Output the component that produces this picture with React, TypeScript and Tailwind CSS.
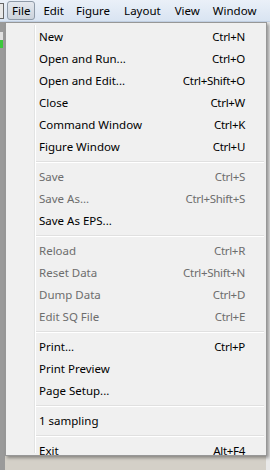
import React from "react";

type Item =
  | { sep: true }
  | { label: string; shortcut?: string; disabled?: boolean; sep?: false };

const items: Item[] = [
  { label: "New", shortcut: "Ctrl+N" },
  { label: "Open and Run...", shortcut: "Ctrl+O" },
  { label: "Open and Edit...", shortcut: "Ctrl+Shift+O" },
  { label: "Close", shortcut: "Ctrl+W" },
  { label: "Command Window", shortcut: "Ctrl+K" },
  { label: "Figure Window", shortcut: "Ctrl+U" },
  { sep: true },
  { label: "Save", shortcut: "Ctrl+S", disabled: true },
  { label: "Save As...", shortcut: "Ctrl+Shift+S", disabled: true },
  { label: "Save As EPS..." },
  { sep: true },
  { label: "Reload", shortcut: "Ctrl+R", disabled: true },
  { label: "Reset Data", shortcut: "Ctrl+Shift+N", disabled: true },
  { label: "Dump Data", shortcut: "Ctrl+D", disabled: true },
  { label: "Edit SQ File", shortcut: "Ctrl+E", disabled: true },
  { sep: true },
  { label: "Print...", shortcut: "Ctrl+P" },
  { label: "Print Preview" },
  { label: "Page Setup..." },
  { sep: true },
  { label: "1 sampling" },
  { sep: true },
  { label: "Exit", shortcut: "Alt+F4" },
];

export default function App() {
  return (
    <div
      className="relative w-[270px] h-[470px] overflow-hidden bg-[#d4d0c8] text-[11.5px]"
      style={{ fontFamily: '"Noto Sans", "Open Sans", sans-serif' }}
    >
      {/* menu bar */}
      <div className="flex h-[22px] items-center bg-gradient-to-b from-[#eaf0f8] to-[#d9e4f2] border-b border-[#c5d3e6] text-black">
        <div className="w-[4px] h-[16px] border border-[#666] border-l-0 bg-[#e8e8e8]" />
        <div className="ml-[3px] h-[19px] px-[4px] flex items-center rounded-[3px] border border-[#8e9aa8] bg-gradient-to-b from-[#e4e8ee] to-[#ccd3dc]">
          File
        </div>
        <div className="ml-[8px]">Edit</div>
        <div className="ml-[12px]">Figure</div>
        <div className="ml-[14px]">Layout</div>
        <div className="ml-[14px]">View</div>
        <div className="ml-[13px]">Window</div>
      </div>
      {/* background strips */}
      <div className="absolute left-0 top-[22px] w-[5px] h-[448px] bg-[#9a9a9a]">
        <div className="mt-[10px] h-[8px] w-[3px] bg-[#e0e0e0]" />
        <div className="h-[8px] w-[3px] bg-[#3cc83c]" />
      </div>
      <div className="absolute right-0 top-[22px] w-[4px] h-[448px] bg-[#e9e9e9]" />

      {/* dropdown */}
      <div className="absolute left-[5px] top-[22px] w-[262px] h-[434px] border border-[#979797] bg-[#f0f0f0] shadow-[2px_2px_3px_rgba(0,0,0,0.35)]">
        <div className="absolute left-[28px] top-[2px] bottom-[2px] w-[1px] bg-[#e2e3e3]" />
        <div className="absolute left-[29px] top-[2px] bottom-[2px] w-[1px] bg-white" />
        <div className="relative flex flex-col pt-[3px] pl-[2px] pr-[2px]">
          {items.map((it, i) =>
            it.sep ? (
              <div key={i} className="h-[8px] flex flex-col justify-center pl-[28px]">
                <div className="h-[1px] bg-[#e0e0e0]" />
                <div className="h-[1px] bg-white" />
              </div>
            ) : (
              <div
                key={i}
                className={`h-[22px] flex items-center justify-between pl-[31px] pr-[19px] ${
                  it.disabled ? "text-[#6d6d6d]" : "text-black"
                }`}
              >
                <span>{it.label}</span>
                <span className="tracking-[-0.3px]">{it.shortcut ?? ""}</span>
              </div>
            )
          )}
        </div>
      </div>
    </div>
  );
}
